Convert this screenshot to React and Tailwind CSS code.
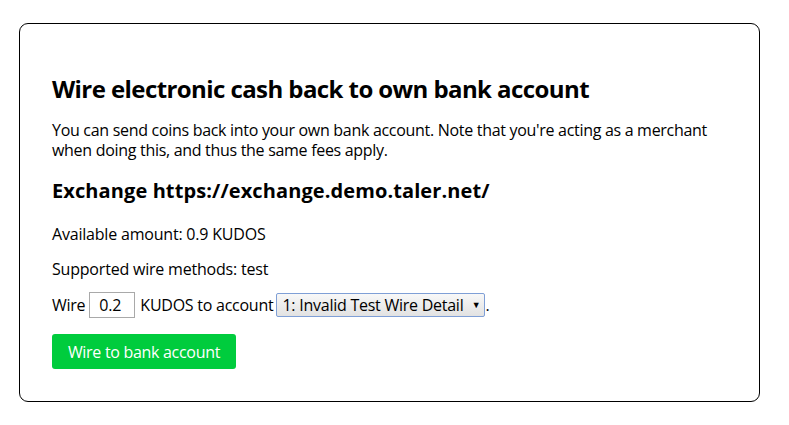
import React from "react";

export default function App() {
  return (
    <div className="w-[789px] h-[425px] bg-white pt-[23px] pl-[19px]" style={{ fontFamily: '"Open Sans", "Noto Sans", sans-serif' }}>
      <div className="w-[741px] h-[379px] border border-black rounded-[9px] pl-[32px] pt-[48px] text-black">
        <h1 className="text-[24px] font-bold leading-[34px] tracking-[-0.58px]">Wire electronic cash back to own bank account</h1>
        <p className="mt-[14px] text-[16px] leading-[20px] tracking-[-0.3px]">
          You can send coins back into your own bank account. Note that you're acting as a merchant<br />
          when doing this, and thus the same fees apply.
        </p>
        <h2 className="mt-[17px] text-[20px] font-bold leading-[28px] tracking-[0.1px]">Exchange https://exchange.demo.taler.net/</h2>
        <p className="mt-[19px] text-[16px] leading-[20px] tracking-[-0.2px]">Available amount: 0.9 KUDOS</p>
        <p className="mt-[15px] text-[16px] leading-[20px] tracking-[-0.2px]">Supported wire methods: test</p>
        <div className="mt-[13px] flex items-center text-[16px] leading-[20px] tracking-[-0.25px]">
          <span>Wire</span>
          <div className="ml-[4px] w-[46px] h-[26px] border border-[#a9a9a9] flex items-center pl-[9px]">0.2</div>
          <span className="ml-[5px]">KUDOS to account</span>
          <div className="ml-[3px] w-[209px] h-[24px] border border-[#7f9fd6] rounded-[2px] bg-gradient-to-b from-[#f8f8f8] to-[#e2e2e2] flex items-center pl-[5px] pr-[4px] justify-between">
            <span>1: Invalid Test Wire Detail</span>
            <span className="text-[9px]">▼</span>
          </div>
          <span>.</span>
        </div>
        <button className="mt-[16px] w-[184px] h-[35px] bg-[#00cc3d] text-white rounded-[3px] text-[16px] tracking-[-0.3px]">Wire to bank account</button>
      </div>
    </div>
  );
}
